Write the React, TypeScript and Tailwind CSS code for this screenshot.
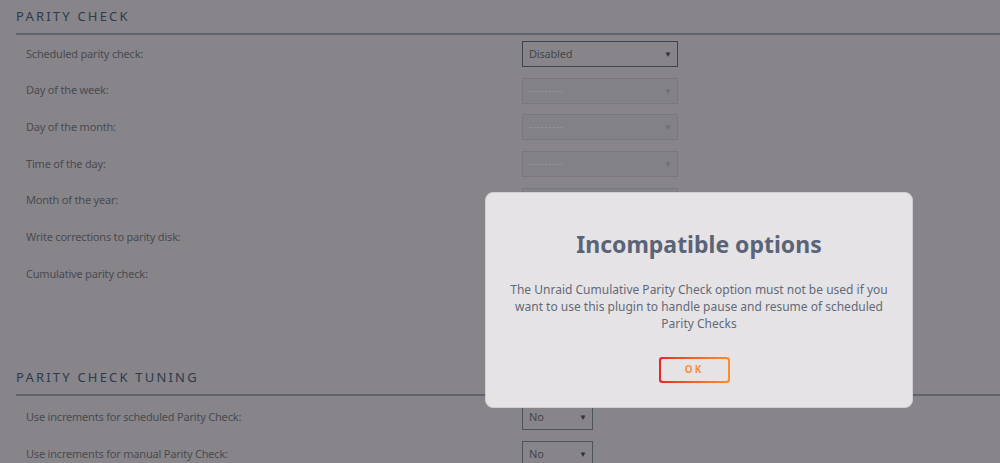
import type { ReactNode } from 'react'

const font = { fontFamily: '"Noto Sans", "Open Sans", sans-serif' }

function Select({ value, width = 'w-[156px]', disabled = false, strong = false }: { value: string; width?: string; disabled?: boolean; strong?: boolean }) {
  const border = strong ? 'border-[#3f4550]' : disabled ? 'border-[#79787c]' : 'border-[#4f535c]'
  const text = disabled ? 'text-[#9b9a9e] text-[9px] tracking-[1px]' : 'text-[#44464c] text-[11px] tracking-[-0.2px]'
  const arrow = disabled ? 'text-[#6f6e72]' : 'text-[#2f333b]'
  return (
    <div className={`flex h-[26px] ${width} items-center justify-between border ${border} ${disabled ? 'bg-[#828185]' : ''} pl-[6px] pr-[5px]`}>
      <span className={text}>{value}</span>
      <span className={`text-[8px] ${arrow}`}>▼</span>
    </div>
  )
}

function Row({ label, children }: { label: string; children?: ReactNode }) {
  return (
    <div className="flex h-[36.7px] items-center">
      <div className="w-[522px] pl-[26px] text-[11px] tracking-[-0.2px] text-[#4a4a51]">{label}</div>
      {children}
    </div>
  )
}

function Heading({ title }: { title: string }) {
  return (
    <div className="ml-[16px] border-b-2 border-[#60636e] pb-[6px]">
      <h2 className="text-[13px] tracking-[2.2px] text-[#2d3a4f]">{title}</h2>
    </div>
  )
}

export default function App() {
  return (
    <div className="relative h-[463px] w-[1000px] overflow-hidden bg-[#878589]" style={font}>
      <div className="pt-[7px]">
        <Heading title="PARITY CHECK" />
        <div className="pt-[1px]">
          <Row label="Scheduled parity check:">
            <Select value="Disabled" strong />
          </Row>
          <Row label="Day of the week:">
            <Select value="---------" disabled />
          </Row>
          <Row label="Day of the month:">
            <Select value="---------" disabled />
          </Row>
          <Row label="Time of the day:">
            <Select value="---------" disabled />
          </Row>
          <Row label="Month of the year:">
            <Select value="---------" disabled />
          </Row>
          <Row label="Write corrections to parity disk:">
            <Select value="No" />
          </Row>
          <Row label="Cumulative parity check:">
            <Select value="No" />
          </Row>
        </div>
        <div className="h-[76px]" />
        <Heading title="PARITY CHECK TUNING" />
        <div className="pt-[3px]">
          <Row label="Use increments for scheduled Parity Check:">
            <Select value="No" width="w-[71px]" />
          </Row>
          <Row label="Use increments for manual Parity Check:">
            <Select value="No" width="w-[71px]" />
          </Row>
        </div>
      </div>

      <div className="absolute left-[485px] top-[192px] flex h-[216px] w-[428px] flex-col items-center rounded-[8px] border border-[#cfcdd0] bg-[#e5e3e6] px-[16px]">
        <h1 className="mt-[34px] text-[23px] font-bold text-[#5a6476]">Incompatible options</h1>
        <p className="mt-[19px] text-center text-[12px] leading-[17px] text-[#636a77]">
          The Unraid Cumulative Parity Check option must not be used if you want to use this plugin to handle pause and resume of scheduled Parity Checks
        </p>
        <div className="mr-[10px] mt-[25px] rounded-[3px] bg-gradient-to-r from-[#e22828] to-[#ff8c2f] p-[2px]">
          <div className="flex h-[22px] w-[67px] items-center justify-center rounded-[2px] bg-[#e5e3e6]">
            <span className="text-[10px] font-bold tracking-[2px] text-[#f5903e]">OK</span>
          </div>
        </div>
      </div>
    </div>
  )
}
